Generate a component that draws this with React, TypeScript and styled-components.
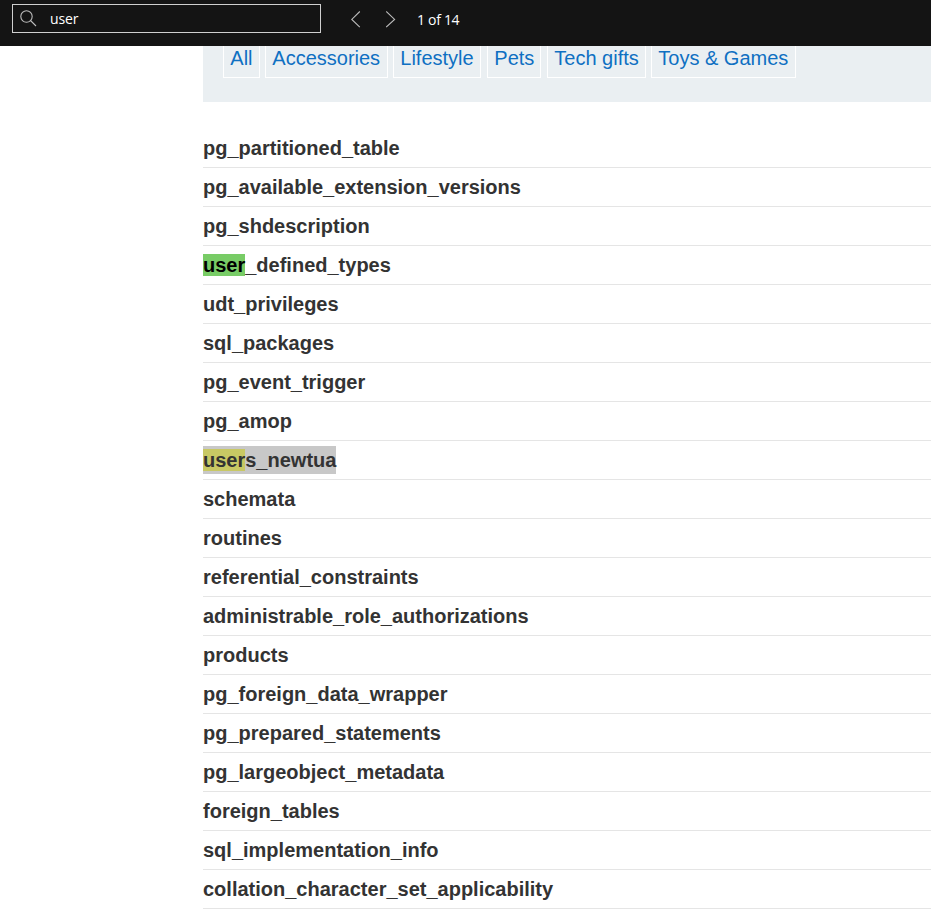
import React from "react";
import styled, { createGlobalStyle } from "styled-components";

const GlobalStyle = createGlobalStyle`
  *, *::before, *::after { box-sizing: border-box; }
  body {
    margin: 0;
    background: #fff;
    overflow: hidden;
    font-family: "Liberation Sans", Arial, sans-serif;
  }
`;

const Page = styled.div`
  display: flex;
  flex-direction: column;
  height: 916px;
  overflow: hidden;
`;

const FindBar = styled.header`
  display: flex;
  align-items: flex-start;
  flex: none;
  height: 46px;
  padding: 4px 0 0 12px;
  background: #141414;
  color: #fff;
  font-family: "Open Sans", "Noto Sans", sans-serif;
  font-size: 14px;
  font-weight: 500;
`;

const SearchField = styled.div`
  display: flex;
  align-items: center;
  width: 309px;
  height: 29px;
  padding: 0 0 0 7px;
  border: 1px solid #cfcfcf;
`;

const SearchIcon = styled.svg`
  flex: none;
  width: 17px;
  height: 17px;
  margin-right: 13px;
`;

const Query = styled.span`
  line-height: 20px;
  letter-spacing: -0.15px;
`;

const StepButton = styled.button<{ $gap: number }>`
  display: flex;
  width: 10px;
  height: 17px;
  margin: 7px 0 0 ${(p) => p.$gap}px;
  padding: 0;
  border: 0;
  background: none;
`;

const MatchCount = styled.span`
  margin: 6px 0 0 21px;
  line-height: 20px;
  letter-spacing: -0.3px;
`;

const Content = styled.main`
  margin-left: 203px;
`;

const Categories = styled.nav`
  display: flex;
  align-items: flex-start;
  height: 56px;
  padding-left: 20px;
  background: #eaeff2;
`;

const Category = styled.a<{ $width: number; $gap: number }>`
  width: ${(p) => p.$width}px;
  height: 32px;
  margin-right: ${(p) => p.$gap}px;
  padding-left: 6.3px;
  border: 1px solid #fff;
  border-top: 0;
  color: #0f70c2;
  font-size: 20px;
  line-height: 24px;
  white-space: nowrap;
`;

const TableList = styled.ul`
  margin: 27px 0 0;
  padding: 0;
  list-style: none;
`;

const TableRow = styled.li`
  height: 39px;
  border-bottom: 1px solid #e5e5e5;
  color: #333;
  font-size: 20px;
  font-weight: 700;
  line-height: 38px;
  white-space: nowrap;
`;

const CurrentMatch = styled.mark`
  background: #78cc66;
  color: #000;
`;

const Selection = styled.span`
  display: inline-block;
  height: 28px;
  line-height: 28px;
  background: #c8c8c8;
`;

const OtherMatch = styled.mark`
  background: #c8c864;
  color: #333;
`;

const categories = [
  { label: "All", width: 37, gap: 5 },
  { label: "Accessories", width: 123, gap: 5 },
  { label: "Lifestyle", width: 88, gap: 6 },
  { label: "Pets", width: 54, gap: 6 },
  { label: "Tech gifts", width: 99, gap: 5 },
  { label: "Toys & Games", width: 145, gap: 0 },
];

const tables: React.ReactNode[] = [
  "pg_partitioned_table",
  "pg_available_extension_versions",
  "pg_shdescription",
  <><CurrentMatch>user</CurrentMatch>_defined_types</>,
  "udt_privileges",
  "sql_packages",
  "pg_event_trigger",
  "pg_amop",
  <Selection><OtherMatch>user</OtherMatch>s_newtua</Selection>,
  "schemata",
  "routines",
  "referential_constraints",
  "administrable_role_authorizations",
  "products",
  "pg_foreign_data_wrapper",
  "pg_prepared_statements",
  "pg_largeobject_metadata",
  "foreign_tables",
  "sql_implementation_info",
  "collation_character_set_applicability",
];

export default function App() {
  return (
    <Page>
      <GlobalStyle />
      <FindBar>
        <SearchField>
          <SearchIcon viewBox="0 0 17 17" fill="none" stroke="#bcbcbc" strokeWidth="1.1">
            <circle cx="6.5" cy="6.5" r="5.7" />
            <path d="M10.5 10.5L16 16" />
          </SearchIcon>
          <Query>user</Query>
        </SearchField>
        <StepButton $gap={30} aria-label="Previous">
          <svg width="10" height="17" viewBox="0 0 10 17" fill="none" stroke="#bcbcbc" strokeWidth="1.1">
            <path d="M8.8 .5L.8 8.4L8.8 16.1" />
          </svg>
        </StepButton>
        <StepButton $gap={25} aria-label="Next">
          <svg width="10" height="17" viewBox="0 0 10 17" fill="none" stroke="#bcbcbc" strokeWidth="1.1">
            <path d="M.2 .5L8.6 8.4L.2 16.1" />
          </svg>
        </StepButton>
        <MatchCount>1 of 14</MatchCount>
      </FindBar>
      <Content>
        <Categories>
          {categories.map((c) => (
            <Category key={c.label} $width={c.width} $gap={c.gap}>
              {c.label}
            </Category>
          ))}
        </Categories>
        <TableList>
          {tables.map((name, i) => (
            <TableRow key={i}>{name}</TableRow>
          ))}
        </TableList>
      </Content>
    </Page>
  );
}
